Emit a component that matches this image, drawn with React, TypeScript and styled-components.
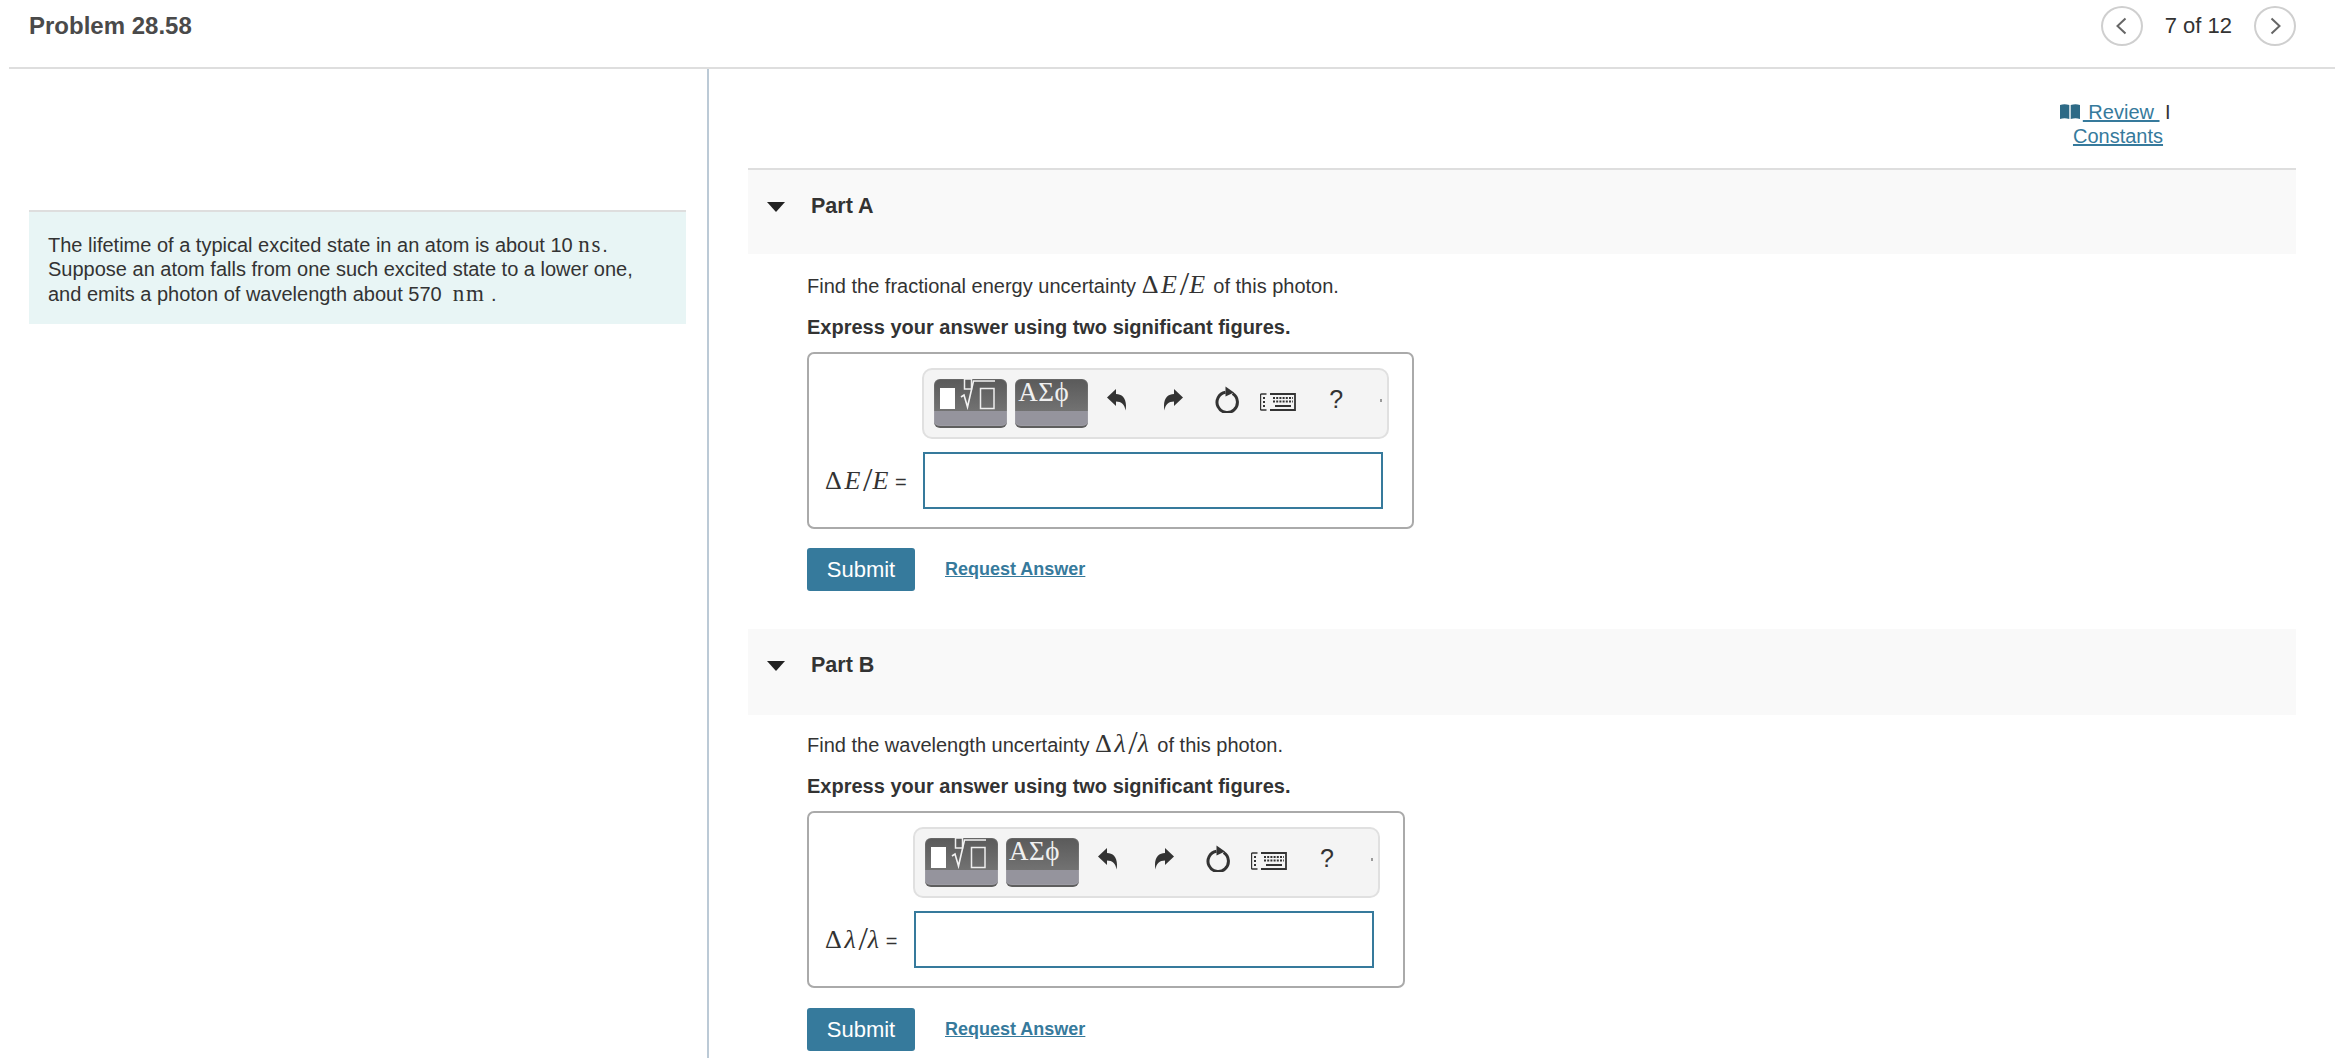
import React from "react";
import styled, { createGlobalStyle } from "styled-components";

const Global = createGlobalStyle`
  html, body { margin: 0; padding: 0; background: #fff; }
  body { font-family: "Liberation Sans", Arial, sans-serif; color: #333; height: 1058px; overflow: hidden; }
`;

const Page = styled.div`
  display: flex;
  flex-direction: column;
  height: 1058px;
  padding: 0 15px 0 9px;
  box-sizing: border-box;
  overflow: hidden;
`;

const Header = styled.header`
  display: flex;
  align-items: center;
  justify-content: space-between;
  height: 69px;
  box-sizing: border-box;
  padding: 6px 39px 22px 20px;
  border-bottom: 2px solid #dedede;
  flex: none;
`;

const Title = styled.h1`
  margin: 0;
  font-size: 24px;
  font-weight: 700;
  color: #4a4a4a;
`;

const Pager = styled.nav`
  display: flex;
  align-items: center;
  gap: 22px;
  font-size: 22px;
  color: #333;
`;

const Round = styled.button`
  width: 42px;
  height: 40px;
  padding: 0;
  display: flex;
  align-items: center;
  justify-content: center;
  border: 2px solid #cfcfcf;
  border-radius: 50%;
  background: #fff;
`;

const Body = styled.div`
  display: flex;
  flex: 1;
  min-height: 0;
`;

const Left = styled.aside`
  width: 700px;
  flex: none;
  box-sizing: border-box;
  padding: 141px 21px 0 20px;
  border-right: 2px solid #bccad6;
`;

const Intro = styled.div`
  background: #e8f5f5;
  border-top: 2px solid #dedede;
  padding: 21px 19px 18px;
  font-size: 20px;
  line-height: 24.4px;
  color: #333;
`;

const Right = styled.main`
  flex: 1;
  min-width: 0;
  padding: 0 39px;
`;

const Links = styled.div`
  height: 99px;
  box-sizing: border-box;
  display: flex;
  justify-content: flex-end;
  padding: 31px 103px 0 0;
`;

const LinkBlock = styled.div`
  width: 150px;
  text-align: center;
  font-size: 20px;
  line-height: 24px;
  color: #333;
`;

const Link = styled.a`
  color: #367a9c;
  text-decoration: underline;
`;

const BookIcon = styled.svg`
  width: 20px;
  height: 16px;
  margin-right: 3px;
  vertical-align: -1px;
`;

const PartHead = styled.div<{ $ruled?: boolean }>`
  height: 86px;
  box-sizing: border-box;
  display: flex;
  align-items: flex-start;
  background: #f9f9f9;
  border-top: ${(p) => (p.$ruled ? "2px solid #dedede" : "none")};
  padding: 24px 0 0 19px;
  font-size: 21.5px;
  font-weight: 700;
  line-height: 24px;
  color: #333;
`;

const Caret = styled.span`
  width: 0;
  height: 0;
  margin: 8px 26px 0 0;
  border-left: 9px solid transparent;
  border-right: 9px solid transparent;
  border-top: 10px solid #222;
`;

const PartBody = styled.section<{ $top: number }>`
  padding: ${(p) => p.$top}px 0 38px 59px;
`;

const Line = styled.p`
  margin: 0;
  height: 24px;
  font-size: 20px;
  line-height: 24px;
  color: #333;
  white-space: nowrap;
`;

const Strong = styled(Line)`
  margin-top: 17px;
  font-weight: 700;
`;

const Math = styled.span`
  font-family: "Liberation Serif", "DejaVu Serif", serif;
  font-size: 26px;
  letter-spacing: 2.7px;
  color: #333;
  line-height: 20px;
`;

const Slash = styled.span`
  font-size: 34px;
  letter-spacing: 0;
  line-height: 0;
  font-weight: 400;
  vertical-align: -2px;
`;

const Unit = styled.span`
  font-family: "Liberation Serif", "DejaVu Serif", serif;
  font-size: 23px;
  letter-spacing: 1.7px;
`;

const Var = styled.i`
  font-style: italic;
`;

const AnswerBox = styled.div`
  display: inline-grid;
  grid-template-columns: auto 467px;
  column-gap: 15.5px;
  row-gap: 13px;
  align-items: center;
  margin-top: 13px;
  padding: 14px 23px 18px 16px;
  border: 2px solid #aaaaaa;
  border-radius: 7px;
  vertical-align: top;
`;

const Toolbar = styled.div`
  grid-column: 2;
  display: flex;
  align-items: flex-start;
  height: 71px;
  box-sizing: border-box;
  padding: 9px 0 0 10px;
  background: #f4f4f4;
  border: 2px solid #e0e0e0;
  border-radius: 10px;
`;

const ToolButton = styled.div<{ $offset?: number }>`
  width: 73px;
  height: 49px;
  flex: none;
  box-sizing: border-box;
  margin-left: ${(p) => p.$offset ?? 0}px;
  border-radius: 6px;
  border-bottom: 2px solid #5e5e5e;
  background: linear-gradient(to bottom, #5a5a5a 0, #727272 68%, #95949d 68%, #95949d 100%);
  box-shadow: inset 0 0 0 1px rgba(255, 255, 255, 0.08);
`;

const ToolSvg = styled.svg`
  display: block;
  width: 73px;
  height: 47px;
`;

const Greek = styled.span`
  display: block;
  padding: 0 0 0 3px;
  font-family: "Liberation Serif", "DejaVu Serif", serif;
  font-size: 27px;
  letter-spacing: 0.5px;
  line-height: 27px;
  color: #f0f0f0;
  white-space: nowrap;
`;

const IconSlot = styled.div<{ $offset: number; $top: number }>`
  flex: none;
  margin-left: ${(p) => p.$offset}px;
  margin-top: ${(p) => p.$top}px;
  display: flex;
  color: #333;
`;

const Help = styled.span`
  font-size: 25px;
  line-height: 28px;
  color: #333;
`;

const Dot = styled.span`
  width: 2px;
  height: 3px;
  background: #9a9a9a;
`;

const Label = styled.div`
  display: flex;
  align-items: baseline;
  gap: 4px;
  white-space: nowrap;
  padding-top: 3px;
`;

const Equals = styled.span`
  font-size: 20px;
  color: #333;
`;

const Input = styled.div`
  width: 460px;
  height: 57px;
  box-sizing: border-box;
  margin-left: 1px;
  border: 2px solid #367a9c;
  background: #fff;
`;

const Actions = styled.div<{ $gap: number }>`
  display: flex;
  align-items: center;
  gap: 30px;
  margin-top: ${(p) => p.$gap}px;
`;

const Submit = styled.button`
  width: 108px;
  height: 43px;
  padding: 0;
  border: 0;
  border-radius: 3px;
  background: #367a9c;
  color: #fff;
  font-family: "Liberation Sans", Arial, sans-serif;
  font-size: 22px;
`;

const Request = styled.a`
  font-size: 18px;
  font-weight: 700;
  color: #367a9c;
  text-decoration: underline;
`;

const Undo = ({ flip }: { flip?: boolean }) => (
  <svg width="20" height="23" viewBox="0 0 20 23" style={flip ? { transform: "scaleX(-1)" } : undefined}>
    <path d="M0 9.5 L9 1 V6 C15.5 6 20.5 11 18.6 22.5 C17.6 16.8 14.5 13.6 9 13.6 V18 Z" fill="#333" />
  </svg>
);

const Reload = () => (
  <svg width="25" height="27" viewBox="0 0 25 27">
    <path d="M18.6 7.6 A10.2 10.2 0 1 1 11.5 6.2" fill="none" stroke="#333" strokeWidth="3" />
    <path d="M11.5 0.5 L20 6.5 L11.5 10.5 Z" fill="#333" />
  </svg>
);

const Keyboard = () => (
  <svg width="36" height="18" viewBox="0 0 36 18" fill="none" stroke="#333">
    <path d="M6.5 1 H1.5 A1 1 0 0 0 0.5 2 V16 A1 1 0 0 0 1.5 17 H6.5" strokeWidth="1.4" />
    <path d="M10 1 H35 V17 H10" strokeWidth="1.8" />
    <path d="M13 5 H33 M13 8.5 H33" strokeWidth="2" strokeDasharray="2 1.2" />
    <path d="M15 13 H31" strokeWidth="2" />
    <path d="M3 5 H5 M3 9 H5 M3 13 H5" strokeWidth="1.8" />
  </svg>
);

const Toolbox = () => (
  <Toolbar>
    <ToolButton>
      <ToolSvg viewBox="0 0 73 47">
        <rect x="6" y="9" width="15" height="21" fill="#fff" />
        <rect x="30.5" y="0" width="7" height="10" fill="none" stroke="#eee" strokeWidth="1.5" />
        <path d="M27 18 L30 16 L33.5 28 L39.5 2 H61" fill="none" stroke="#f2f2f2" strokeWidth="1.6" />
        <rect x="46.5" y="9.5" width="13.5" height="20" fill="none" stroke="#eee" strokeWidth="1.5" />
      </ToolSvg>
    </ToolButton>
    <ToolButton $offset={8}>
      <Greek>ΑΣϕ</Greek>
    </ToolButton>
    <IconSlot $offset={19} $top={9}><Undo /></IconSlot>
    <IconSlot $offset={36} $top={9}><Undo flip /></IconSlot>
    <IconSlot $offset={31} $top={7}><Reload /></IconSlot>
    <IconSlot $offset={21} $top={14}><Keyboard /></IconSlot>
    <IconSlot $offset={33} $top={6}><Help>?</Help></IconSlot>
    <IconSlot $offset={37} $top={20}><Dot /></IconSlot>
  </Toolbar>
);

type PartProps = {
  name: string;
  ruled?: boolean;
  prompt: string;
  math: React.ReactNode;
  top: number;
  gap: number;
};

const Part = ({ name, ruled, prompt, math, top, gap }: PartProps) => (
  <>
    <PartHead $ruled={ruled}>
      <Caret />
      {name}
    </PartHead>
    <PartBody $top={top}>
      <Line>
        Find the {prompt} uncertainty <Math>{math}</Math> of this photon.
      </Line>
      <Strong>Express your answer using two significant figures.</Strong>
      <AnswerBox>
        <Toolbox />
        <Label>
          <Math>{math}</Math>
          <Equals>=</Equals>
        </Label>
        <Input />
      </AnswerBox>
      <Actions $gap={gap}>
        <Submit>Submit</Submit>
        <Request href="#">Request Answer</Request>
      </Actions>
    </PartBody>
  </>
);

export default function App() {
  return (
    <Page>
      <Global />
      <Header>
        <Title>Problem 28.58</Title>
        <Pager>
          <Round aria-label="Previous">
            <svg width="22" height="22" viewBox="0 0 22 22" fill="none" stroke="#666" strokeWidth="2">
              <path d="M14.5 3.5 L6.5 11 L14.5 18.5" />
            </svg>
          </Round>
          <span>7 of 12</span>
          <Round aria-label="Next">
            <svg width="22" height="22" viewBox="0 0 22 22" fill="none" stroke="#666" strokeWidth="2">
              <path d="M7.5 3.5 L15.5 11 L7.5 18.5" />
            </svg>
          </Round>
        </Pager>
      </Header>
      <Body>
        <Left>
          <Intro>
            The lifetime of a typical excited state in an atom is about 10 <Unit>ns</Unit>.
            <br />
            Suppose an atom falls from one such excited state to a lower one,
            <br />
            and emits a photon of wavelength about 570 &nbsp;<Unit>nm</Unit> .
          </Intro>
        </Left>
        <Right>
          <Links>
            <LinkBlock>
              <BookIcon viewBox="0 0 20 16">
                <path d="M0 1 C3 0 6 0 9.3 1 V15 C6 14 3 14 0 15 Z M10.7 1 C14 0 17 0 20 1 V15 C17 14 14 14 10.7 15 Z" fill="#2d6a86" />
              </BookIcon>
              <Link href="#">&nbsp;Review&nbsp;</Link> I&nbsp;
              <br />
              <Link href="#">Constants</Link>
            </LinkBlock>
          </Links>
          <Part
            name="Part A"
            ruled
            prompt="fractional energy"
            top={20}
            gap={19}
            math={<>Δ<Var>E</Var><Slash>/</Slash><Var>E</Var></>}
          />
          <Part
            name="Part B"
            prompt="wavelength"
            top={18}
            gap={20}
            math={<>Δ<Var>λ</Var><Slash>/</Slash><Var>λ</Var></>}
          />
        </Right>
      </Body>
    </Page>
  );
}
